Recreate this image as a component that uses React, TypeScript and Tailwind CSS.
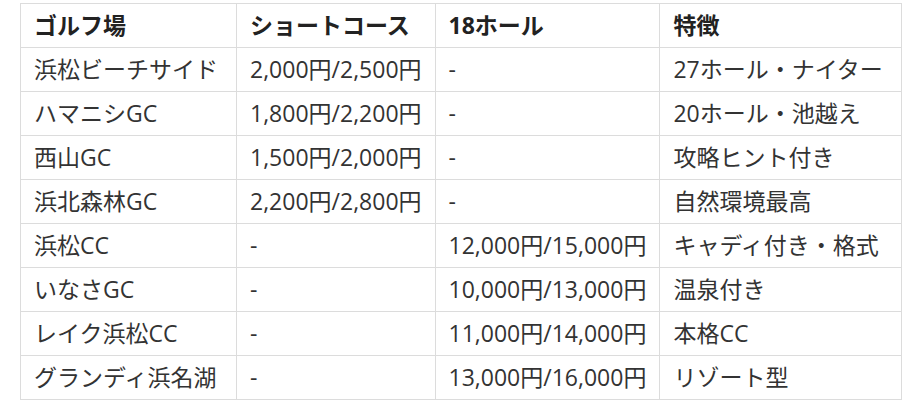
const rows = [
  ['浜松ビーチサイド', '2,000円/2,500円', '-', '27ホール・ナイター'],
  ['ハマニシGC', '1,800円/2,200円', '-', '20ホール・池越え'],
  ['西山GC', '1,500円/2,000円', '-', '攻略ヒント付き'],
  ['浜北森林GC', '2,200円/2,800円', '-', '自然環境最高'],
  ['浜松CC', '-', '12,000円/15,000円', 'キャディ付き・格式'],
  ['いなさGC', '-', '10,000円/13,000円', '温泉付き'],
  ['レイク浜松CC', '-', '11,000円/14,000円', '本格CC'],
  ['グランディ浜名湖', '-', '13,000円/16,000円', 'リゾート型'],
]

const headers = ['ゴルフ場', 'ショートコース', '18ホール', '特徴']
const widths = ['w-[216px]', 'w-[197px]', 'w-[221px]', 'w-[242px]']

export default function App() {
  return (
    <div
      className="bg-white pl-[20px] pt-[3px] text-[#333]"
      style={{ fontFamily: '"Open Sans", "Noto Sans CJK JP", sans-serif' }}
    >
      <table className="border-collapse table-fixed text-[23px] leading-none">
        <thead>
          <tr>
            {headers.map((h, i) => (
              <th
                key={h}
                className={`${widths[i]} h-[44px] border border-[#dcdcdc] px-[13px] text-left font-bold text-[#222] whitespace-nowrap`}
              >
                {h}
              </th>
            ))}
          </tr>
        </thead>
        <tbody>
          {rows.map((r) => (
            <tr key={r[0]}>
              {r.map((c, i) => (
                <td
                  key={i}
                  className="h-[44px] border border-[#dcdcdc] px-[13px] whitespace-nowrap"
                >
                  {c}
                </td>
              ))}
            </tr>
          ))}
        </tbody>
      </table>
    </div>
  )
}
